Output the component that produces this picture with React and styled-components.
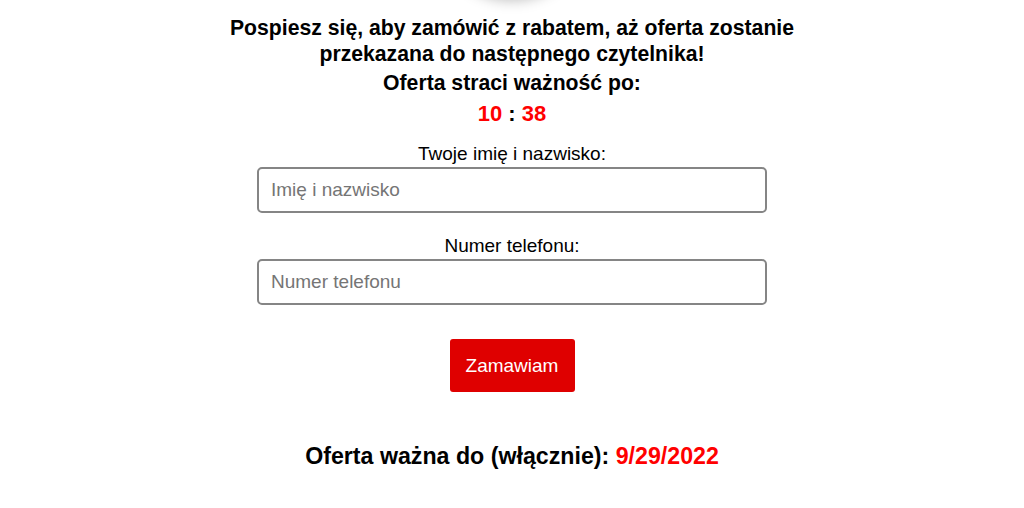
import React from 'react';
import styled, { createGlobalStyle } from 'styled-components';

const GlobalStyle = createGlobalStyle`
  body {
    margin: 0;
    background: #fff;
    font-family: "Liberation Sans", Arial, sans-serif;
    color: #000;
  }
`;

const Page = styled.div`
  display: flex;
  flex-direction: column;
  align-items: center;
  overflow: hidden;
  height: 508px;
`;

const Avatar = styled.div`
  width: 150px;
  height: 150px;
  margin-top: -150px;
  border-radius: 50%;
  background: #fff;
  box-shadow: 0 0 14px rgba(0, 0, 0, 0.28);
  flex-shrink: 0;
`;

const Heading = styled.h2`
  width: 600px;
  margin: ${({ $gap }) => $gap || 0}px 0 0;
  font-size: 21.2px;
  line-height: 26px;
  font-weight: bold;
  text-align: center;
`;

const Timer = styled.div`
  margin-top: 5px;
  font-size: 22px;
  line-height: 26px;
  font-weight: bold;
  color: #000;
`;

const Red = styled.span`
  color: #ff0000;
`;

const Form = styled.form`
  display: flex;
  flex-direction: column;
  align-items: center;
  margin-top: 16px;
`;

const Label = styled.label`
  margin-top: ${({ $gap }) => $gap || 0}px;
  font-size: 19px;
  line-height: 22px;
`;

const Input = styled.input`
  box-sizing: border-box;
  width: 510px;
  height: 46px;
  margin-top: 2px;
  padding: 0 12px;
  border: 2px solid #858585;
  border-radius: 5px;
  font-family: inherit;
  font-size: 19px;
  color: #000;
  outline: none;
  &::placeholder {
    color: #757575;
  }
`;

const Button = styled.button`
  width: 125px;
  height: 53px;
  margin-top: 34px;
  border: none;
  border-radius: 3px;
  background: #df0000;
  color: #fff;
  font-family: inherit;
  font-size: 19px;
  cursor: pointer;
`;

const Deadline = styled.div`
  margin-top: 50px;
  font-size: 23.2px;
  line-height: 28px;
  font-weight: bold;
`;

export default function App() {
  return (
    <>
      <GlobalStyle />
      <Page>
        <Avatar />
        <Heading $gap={15}>
          Pospiesz się, aby zamówić z rabatem, aż oferta zostanie przekazana do
          następnego czytelnika!
        </Heading>
        <Heading $gap={3}>Oferta straci ważność po:</Heading>
        <Timer>
          <Red>10</Red> : <Red>38</Red>
        </Timer>
        <Form onSubmit={(e) => e.preventDefault()}>
          <Label htmlFor="name">Twoje imię i nazwisko:</Label>
          <Input id="name" placeholder="Imię i nazwisko" />
          <Label htmlFor="phone" $gap={22}>Numer telefonu:</Label>
          <Input id="phone" placeholder="Numer telefonu" />
          <Button type="submit">Zamawiam</Button>
        </Form>
        <Deadline>
          Oferta ważna do (włącznie): <Red>9/29/2022</Red>
        </Deadline>
      </Page>
    </>
  );
}
